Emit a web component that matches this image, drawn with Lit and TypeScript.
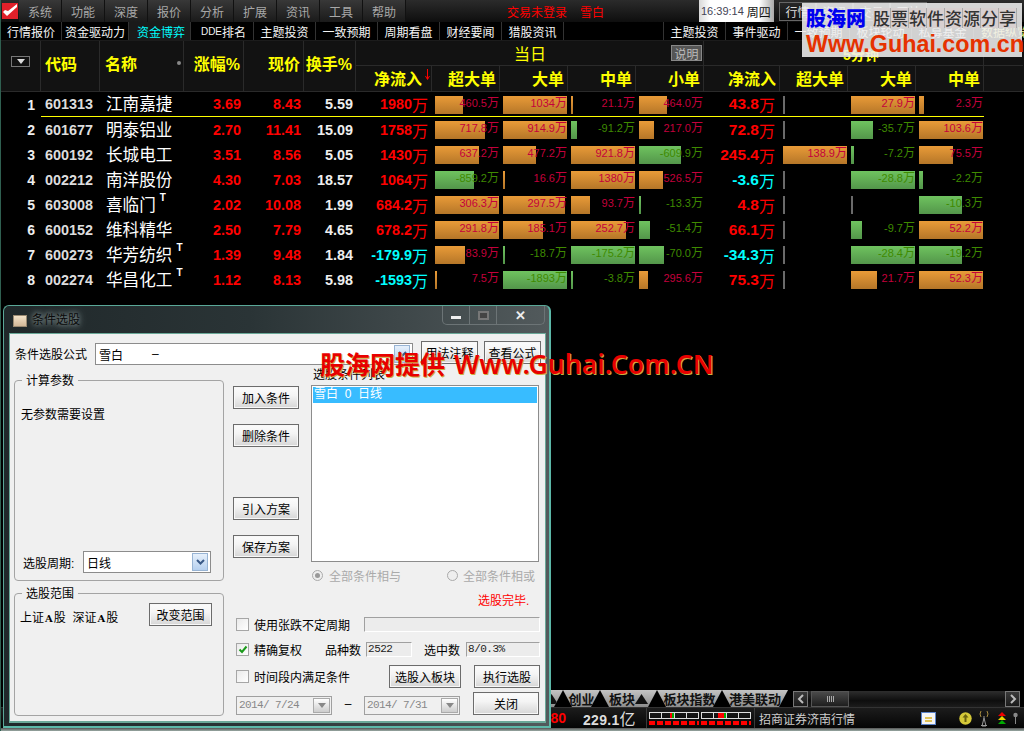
import { LitElement, html, css } from "lit";
import { customElement } from "lit/decorators.js";

type Row = { n: string; code: string; name: string; t?: boolean; pct: string; price: string; turn: string; net: string; net5: string; cells: [string, number][] };

const rows: Row[] = [
  { n: "1", code: "601313", name: "江南嘉捷", pct: "3.69", price: "8.43", turn: "5.59", net: "1980万", net5: "43.8万",
    cells: [["460.5万", 28], ["1034万", 64], ["21.1万", 2], ["464.0万", 28], ["", 2], ["27.9万", 64], ["2.3万", 5]] },
  { n: "2", code: "601677", name: "明泰铝业", pct: "2.70", price: "11.41", turn: "15.09", net: "1758万", net5: "72.8万",
    cells: [["717.8万", 50], ["914.9万", 64], ["-91.2万", 6], ["217.0万", 15], ["", 2], ["-35.7万", 22], ["103.6万", 64]] },
  { n: "3", code: "600192", name: "长城电工", pct: "3.51", price: "8.56", turn: "5.05", net: "1430万", net5: "245.4万",
    cells: [["637.2万", 44], ["477.2万", 33], ["921.8万", 64], ["-609.9万", 42], ["138.9万", 64], ["-7.2万", 3], ["75.5万", 34]] },
  { n: "4", code: "002212", name: "南洋股份", pct: "4.30", price: "7.03", turn: "18.57", net: "1064万", net5: "-3.6万",
    cells: [["-859.2万", 39], ["16.6万", 2], ["1380万", 64], ["526.5万", 24], ["", 2], ["-28.8万", 64], ["-2.2万", 4]] },
  { n: "5", code: "603008", name: "喜临门", t: true, pct: "2.02", price: "10.08", turn: "1.99", net: "684.2万", net5: "4.8万",
    cells: [["306.3万", 64], ["297.5万", 62], ["93.7万", 19], ["-13.3万", 2], ["", 2], ["", 2], ["-10.3万", 43]] },
  { n: "6", code: "600152", name: "维科精华", pct: "2.50", price: "7.79", turn: "4.65", net: "678.2万", net5: "66.1万",
    cells: [["291.8万", 64], ["185.1万", 40], ["252.7万", 55], ["-51.4万", 11], ["", 2], ["-9.7万", 11], ["52.2万", 64]] },
  { n: "7", code: "600273", name: "华芳纺织", t: true, pct: "1.39", price: "9.48", turn: "1.84", net: "-179.9万", net5: "-34.3万",
    cells: [["83.9万", 30], ["-18.7万", 2], ["-175.2万", 64], ["-70.0万", 25], ["", 2], ["-28.4万", 64], ["-19.2万", 43]] },
  { n: "8", code: "002274", name: "华昌化工", t: true, pct: "1.12", price: "8.13", turn: "5.98", net: "-1593万", net5: "75.3万",
    cells: [["7.5万", 2], ["-1893万", 64], ["-3.8万", 2], ["295.6万", 9], ["", 2], ["21.7万", 26], ["52.3万", 64]] },
];

const menus = ["系统", "功能", "深度", "报价", "分析", "扩展", "资讯", "工具", "帮助"];

@customElement("app-root")
export class AppRoot extends LitElement {
  static styles = css`
    :host { display: block; width: 1024px; height: 731px; overflow: hidden; position: relative; background: #000;
      font-family: "Liberation Sans", "Noto Sans CJK SC", sans-serif; font-size: 12px; color: #fff; }
    * { box-sizing: border-box; }
    .app { display: flex; flex-direction: column; height: 731px; border-left: 1px solid #2f5f50; overflow: hidden; }

    .menubar { height: 22px; display: flex; align-items: stretch; background: linear-gradient(#2b2b2b, #0e0e0e); flex: none; margin-left: -1px; }
    .logo { width: 19px; flex: none; display: flex; align-items: center; justify-content: center; }
    .menu { width: 43px; flex: none; border-right: 1px solid #111; background: linear-gradient(#383838, #1a1a1a); color: #a8a8a8;
      display: flex; align-items: center; padding-left: 9px; font-size: 12px; }
    .trade { margin-left: 101px; color: #f00; width: 73px; flex: none; display: flex; align-items: center; }
    .user { color: #f00; width: 119px; flex: none; display: flex; align-items: center; }
    .clock { width: 75px; flex: none; background: linear-gradient(90deg, #d8d8d8, #fff 15%, #fff 80%, #aaa); display: flex; align-items: center; padding-left: 2px; gap: 3px; color: #111; }
    .clock b { font-weight: normal; font-size: 11px; color: #445; }
    .topbtn { display: flex; align-items: center; margin: 2px 0 1px 5px; flex: 1; }
    .topbtn span { width: 37px; height: 19px; border: 1px solid #666; color: #ddd; display: flex; align-items: center; justify-content: center; }

    .tabs { height: 19px; flex: none; background: #000; display: flex; align-items: stretch; border-bottom: 1px solid #1c1c1c; overflow: hidden; }
    .tab { width: 62px; flex: none; border-right: 1px solid #333; display: flex; align-items: center; justify-content: center; color: #f4f4f4; font-size: 12px; white-space: nowrap; }
    .tab.first { width: 61px; }
    .tab.wide { width: 67px; }
    .tab.active { color: #0ff; background: #1a1a1a; padding-left: 3px; }
    .tab.dde { width: 63px; padding-left: 3px; }
    .tab.dde small { font-size: 10px; }
    .tab.blank { width: 100px; }
    .tab.gold { color: #ffff80; border-right: 0; }

    .grid { display: grid; grid-template-columns: 40px 59px 84px 60px 60px 52px 76px 68px 68px 68px 68px 76px 68px 68px 68px 39px; }
    .head { height: 51px; grid-template-rows: 25px 26px; background: #121212; flex: none; }
    .h { border-right: 1px solid #2a2a2a; border-bottom: 1px solid #2a2a2a; color: #ff0; font-weight: bold; font-size: 16px; display: flex; align-items: center; white-space: nowrap; }
    .h.span2 { grid-row: 1 / span 2; padding-bottom: 7px; }
    .h.r { justify-content: flex-end; padding-right: 3px; }
    .h.l { padding-left: 4px; }
    .h.l2 { padding-left: 5px; }
    .h.sub { justify-content: flex-end; padding: 0 3px 2px 0; }
    .h.first { justify-content: center; padding-bottom: 10px; }
    .drop { width: 19px; height: 11px; border: 1px solid #777; display: flex; align-items: center; justify-content: center; }
    .drop::after { content: ""; border: 4px solid transparent; border-top: 5px solid #ddd; border-bottom: 0; }
    .dot { width: 4px; height: 4px; border-radius: 50%; background: #888; margin-left: 40px; }
    .arrow { margin: -6px 0 0 3px; display: block; }
    .h.sub.witharrow { padding-right: 1px; }
    .today { grid-column: 7 / span 5; padding-left: 158px; font-weight: normal; justify-content: space-between; padding-right: 1px; }
    .today i { font-style: normal; font-weight: normal; font-size: 12px; width: 31px; height: 16px; background: #555; border: 1px solid #888; color: #bbb; display: flex; align-items: center; justify-content: center; }
    .five { grid-column: 12 / span 4; padding-left: 139px; font-size: 14px; padding-top: 2px; }
    .empty { grid-column: 16; border-right: 0; }
    .h.noedge { border-right: 0; }

    .row { height: 25px; flex: none; }
    .c { display: flex; align-items: center; white-space: nowrap; height: 25px; }
    .row.hl .c:not(:first-child):not(:last-child) { border-bottom: 1px solid #ff0; }
    .num { justify-content: flex-end; padding-right: 6px; font-weight: bold; font-size: 14px; color: #eee; }
    .code { padding-left: 4px; font-weight: bold; font-size: 14.4px; color: #ddd; }
    .name { padding: 0 0 2px 6px; font-size: 16.6px; }
    .name sup { font-size: 10px; font-weight: bold; margin-left: 4px; line-height: 1; align-self: flex-start; margin-top: 1px; }
    .val { justify-content: flex-end; padding-right: 3px; font-weight: bold; font-size: 14.4px; color: #f00; }
    .val.white { color: #eee; }
    .val.netv { padding-right: 4px; }
    .val.net5 { font-size: 15.5px; padding-right: 5px; }
    .unit { font-size: 16px; font-weight: normal; }
    .red { color: #f00; } .cyan { color: #0ff; }
    .cell { padding: 4px 0 3px 3px; display: flex; align-items: flex-start; }
    .track { display: grid; grid-template: 18px / 64px; width: 64px; }
    .bar { grid-area: 1 / 1; height: 18px; }
    .bar.up { background: linear-gradient(#e99b38, #b57628); }
    .bar.down { background: linear-gradient(#6fc35f, #53964a); }
    .bar.flat { background: #6a6a6a; }
    .lbl { grid-area: 1 / 1; justify-self: end; font-size: 11px; line-height: 15px; white-space: nowrap; height: 18px; z-index: 1; }
    .lbl u { text-decoration: none; font-size: 12px; }
    .lbl.up { color: #c4003c; }
    .lbl.down { color: #3f8a00; }

    .fill { flex: 1; }

    .btabs { height: 17px; flex: none; display: flex; background: #000; }
    .btab-pad { width: 499px; flex: none; }
    .btab { height: 17px; flex: none; background: linear-gradient(#c4c4c4, #8c8c8c); color: #111; font-weight: bold; font-size: 13px; display: flex; align-items: center; justify-content: center;
      clip-path: polygon(0 0, 100% 0, calc(100% - 9px) 100%, 9px 100%); white-space: nowrap; }
    .btab svg { display: block; flex: none; }
    .btab.b0 { width: 63px; justify-content: flex-end; padding-right: 5px; }
    .btab.b1 { width: 37px; } .btab.b2 { width: 57px; } .btab.b3 { width: 65px; } .btab.b4 { width: 66px; }
    .scroll { margin-left: 5px; width: 227px; height: 16px; margin-top: 1px; flex: none; display: flex; background: linear-gradient(#2e2e2e, #0e0e0e 60%, #1c1c1c); align-items: stretch; }
    .sb { width: 15px; border: 1px solid #777; background: linear-gradient(#3a3a3a, #1a1a1a); display: flex; align-items: center; justify-content: center; }
    .thumb { width: 38px; margin-left: 3px; border: 1px solid #555; background: linear-gradient(#4a4a4a, #1e1e1e); display: flex; align-items: center; justify-content: center; }
    .thumb i { width: 7px; height: 6px; background: repeating-linear-gradient(90deg, #aaa 0 1px, transparent 1px 2px); }
    .sp { flex: 1; }

    .status { height: 21px; flex: none; background: linear-gradient(#1c1c1c, #050505); border-top: 1px solid #333; display: flex; align-items: center; }
    .s80 { width: 565px; flex: none; text-align: right; color: #f00; font-weight: bold; font-size: 14px; }
    .amount { margin-left: 17px; width: 63px; flex: none; font-weight: bold; font-size: 14px; color: #ddd; white-space: nowrap; letter-spacing: .3px; }
    .amount span { font-weight: normal; font-size: 16px; }
    .vsep { width: 1px; background: #3a3a3a; align-self: stretch; flex: none; }
    .gauges { display: flex; gap: 2px; margin: 0 3px 0 2px; flex: none; }
    .gauge { width: 50px; display: flex; flex-direction: column; gap: 2px; }
    .gbox { height: 7px; border: 1px solid #ddd; display: flex; }
    .gbox i { flex: 1; border-right: 1px solid #ddd; }
    .gbox i:last-child { border-right: 0; }
    .gbox i.m1 { background: linear-gradient(90deg, transparent 65%, #f00 65% 85%, #0a0 85%); }
    .gbox i.m2 { background: linear-gradient(90deg, transparent 30%, #f00 30% 85%, #0a0 85%); }
    .dash { height: 4px; background: repeating-linear-gradient(90deg, #f00 0 6px, transparent 6px 8px); }
    .stxt { margin-left: 4px; color: #ccc; font-size: 12px; white-space: nowrap; width: 162px; flex: none; }
    .icon { display: block; flex: none; }
    .i1 { width: 15px; height: 13px; margin-right: 23px; }
    .i2 { width: 13px; height: 13px; margin-right: 6px; }
    .i3 { width: 12px; height: 17px; margin-right: 8px; }
    .i4 { width: 8px; height: 13px; margin-right: 7px; }
    .i5 { width: 5px; height: 13px; }
    .frame { height: 3px; flex: none; background: linear-gradient(#555, #99aaa4); }

    .dialog { position: absolute; left: 3px; top: 305px; width: 548px; height: 423px; background: linear-gradient(90deg, #20282a, #2a3436 45%, #525a5c);
      border: 1px solid #5aa898; border-right: 2px solid #5cb8a8; border-bottom: 2px solid #5cb8a8; border-radius: 6px 6px 0 0; padding: 0 3px 3px 5px; display: flex; flex-direction: column; color: #000; }
    .title { height: 27px; flex: none; display: flex; align-items: flex-start; }
    .ticon { width: 14px; height: 12px; margin: 9px 5px 0 4px; background: linear-gradient(#f3e2c8, #d2b898); border: 1px solid #9a8a72; }
    .ttext { color: #0a0a0a; font-size: 12px; margin-top: 6px; line-height: 16px; text-shadow: 0 0 5px #8c9c9c, 0 0 8px #8c9c9c; }
    .wbtns { margin-left: auto; display: flex; height: 19px; border: 1px solid #6c7476; border-top: 0; border-radius: 0 0 5px 5px; margin-right: 1px; }
    .wb { display: flex; align-items: center; justify-content: center; border-right: 1px solid #6c7476; width: 27px; }
    .wb.x { width: 47px; border-right: 0; color: #eee; font-weight: bold; font-size: 13px; }
    .wb .min { width: 10px; height: 3px; background: #eee; margin-top: 5px; }
    .wb .max { width: 11px; height: 9px; border: 2px solid #777; background: #444; }
    .client { flex: 1; background: #f0f0f0; border: 1px solid #6aa898; border-bottom-width: 2px; display: flex; flex-direction: column; font-size: 12px; color: #000; min-height: 0; }
    .topline { display: flex; align-items: flex-start; height: 33px; padding: 7px 0 0 5px; }
    .topline label { width: 80px; flex: none; margin-top: 4px; white-space: nowrap; }
    .combo { width: 318px; flex: none; height: 22px; margin-top: 2px; border: 1px solid #8c8c8c; background: #fff; display: flex; align-items: center; padding-left: 3px; margin-right: 8px; }
    .combo span { width: 53px; }
    .dbtn { width: 16px; height: 18px; margin-left: auto; margin-right: 2px; background: linear-gradient(#e6f0fb, #b6d0ef); border: 1px solid #98b4d4; display: flex; align-items: center; justify-content: center; }
    .btn { display: flex; align-items: center; justify-content: center; width: 66px; height: 23px; flex: none; border: 1px solid #6c6c6c; background: linear-gradient(#fafafa 0 2px, #f4f4f4 40%, #d6d6d6); color: #000; white-space: nowrap; box-shadow: inset 0 0 0 1px #f8f8f8; }
    .btn.n { width: 57px; margin-right: 6px; }
    .btn.range { width: 63px; margin-left: auto; margin-right: 11px; margin-top: -5px; }
    .btn.panel { width: 72px; margin-left: 39px; }
    .btn.mgl { margin-left: 13px; }
    .body { display: flex; padding-left: 4px; flex: 1; }
    .leftc { width: 210px; flex: none; display: flex; flex-direction: column; gap: 12px; padding-top: 13px; }
    .gr { border: 1px solid #a4a4a4; border-radius: 4px; position: relative; }
    .gr > em { position: absolute; left: 7px; top: -7px; background: #f0f0f0; padding: 0 4px; font-style: normal; line-height: 14px; }
    .g1 { height: 201px; display: flex; flex-direction: column; justify-content: space-between; padding: 24px 0 7px 6px; }
    .g2 { height: 123px; padding: 14px 0 0 5px; display: flex; align-items: flex-start; }
    .g2 b { font-family: "DejaVu Serif", serif; font-size: 10px; font-weight: bold; margin: 0 1px; }
    .period { display: flex; align-items: center; gap: 3px; margin-left: 2px; }
    .period label { width: 57px; }
    .sel { width: 128px; height: 22px; border: 1px solid #8c8c8c; background: #fff; display: flex; align-items: center; padding-left: 3px; }
    .rightc { margin-left: 9px; width: 308px; flex: none; display: flex; flex-direction: column; }
    .upper { display: flex; height: 216px; flex: none; }
    .midc { width: 66px; display: flex; flex-direction: column; padding-top: 19px; }
    .mg15 { margin-top: 15px; } .mg50 { margin-top: 50px; }
    .listc { margin-left: 12px; width: 230px; }
    .listlabel { height: 18px; padding: 1px 0 0 2px; line-height: 14px; }
    .list { width: 228px; height: 177px; border: 1px solid #8c8c8c; background: #fff; padding: 1px; }
    .item { height: 16px; background: #38bcff; color: #fff; padding-left: 1px; line-height: 14px; white-space: pre; }
    .radios { display: flex; height: 16px; margin-top: 5px; color: #aaa; align-items: center; padding-left: 1px; white-space: nowrap; }
    .rd { width: 11px; height: 11px; border-radius: 50%; border: 1px solid #aaa; background: #eee; margin-right: 6px; flex: none; display: flex; align-items: center; justify-content: center; }
    .rd.on::after { content: ""; width: 5px; height: 5px; border-radius: 50%; background: #999; }
    .rd.sec { margin-left: 46px; margin-right: 5px; }
    .done { margin-top: 11px; height: 14px; color: #f00; padding-left: 245px; line-height: 14px; white-space: nowrap; flex: none; }
    .frow { display: flex; align-items: center; padding-left: 3px; white-space: nowrap; flex: none; }
    .fa { height: 16px; margin-top: 8px; }
    .fb { height: 16px; margin-top: 9px; }
    .fc { height: 23px; margin-top: 8px; }
    .fd { height: 23px; margin-top: 4px; }
    .chk { width: 13px; height: 13px; border: 1px solid #a6a6a6; background: linear-gradient(135deg, #eaeaea, #fff); margin-right: 5px; flex: none; display: flex; align-items: center; justify-content: center; }
    .field { height: 15px; flex: none; background: #ececec; border: 1px solid; border-color: #a0a0a0 #fff #fff #a0a0a0; font-family: "Liberation Mono", monospace; font-size: 11px; line-height: 13px; padding-left: 1px; letter-spacing: -.5px; color: #222; }
    .field.w176 { width: 176px; margin-left: 14px; }
    .field.w46 { width: 46px; margin: 0 12px 0 5px; }
    .field.w74 { width: 74px; margin-left: 6px; }
    .lb1 { margin-left: 23px; }
    .date { width: 96px; flex: none; height: 19px; border: 1px solid #a0a0a0; display: flex; align-items: center; justify-content: space-between; padding: 0 1px 0 2px; color: #888; font-family: "Liberation Mono", monospace; font-size: 11px; letter-spacing: -.6px; background: #f0f0f0; margin-top: 3px; }
    .date i { width: 17px; height: 15px; background: linear-gradient(#fff, #ccc); border: 1px solid #aaa; display: flex; align-items: center; justify-content: center; }
    .date i::after { content: ""; border: 4px solid transparent; border-top: 5px solid #888; border-bottom: 0; }
    .dash2 { width: 32px; text-align: center; }

    .mark { position: absolute; left: 320px; top: 347px; color: #e80000; font-size: 25px; font-weight: 700; line-height: 32px; white-space: nowrap; text-shadow: 1px 1px 0 #c8b040; font-family: "Noto Sans CJK SC", sans-serif; }
    .mark span { font-family: "Noto Sans", sans-serif; font-weight: 600; font-size: 26.6px; margin-left: 9px; }
    .wm { position: absolute; left: 802px; top: 3px; width: 220px; height: 54px; background: rgba(238, 238, 238, .88); }
    .wm1 { display: flex; height: 26px; align-items: center; padding: 4px 0 0 4px; }
    .wmb { color: #0000f0; font-size: 20px; font-weight: 900; width: 67px; line-height: 24px; font-family: "Noto Sans CJK SC", sans-serif; }
    .wmt { display: flex; color: #333; font-size: 17px; font-family: "Noto Sans CJK SC", sans-serif; font-weight: 500; }
    .wmt i { font-style: normal; width: 18px; height: 20px; text-align: center; line-height: 19px; background: #d8d0d0; border-right: 1px solid #aaa; }
    .wm2 { color: #e63200; font-weight: bold; font-size: 23.3px; line-height: 30px; padding-left: 4px; font-family: "Liberation Sans", sans-serif; white-space: nowrap; }
  `;

  private bar(c: [string, number]) {
    const [text, w] = c;
    const kind = text === "" ? "flat" : text.startsWith("-") ? "down" : "up";
    return html`<div class="c cell"><div class="track">
      <div class="bar ${kind}" style="width:${w}px"></div>
      ${text ? html`<div class="lbl ${kind}">${text.slice(0, -1)}<u>万</u></div>` : ""}
    </div></div>`;
  }

  private money(v: string) {
    return html`${v.slice(0, -1)}<span class="unit">万</span>`;
  }

  private tri() {
    return html`<svg width="13" height="10" viewBox="0 0 13 10"><path d="M6.5 0L13 10H0Z" fill="#111"/></svg>`;
  }

  render() {
    return html`
      <div class="app">
        <div class="menubar">
          <div class="logo">
            <svg width="16" height="16" viewBox="0 0 16 16"><rect width="16" height="16" fill="#e0202a"/><path d="M1 9 L5 13 L15 4 L15 1 L6 8 L3 7 Z" fill="#fff"/></svg>
          </div>
          ${menus.map((m) => html`<div class="menu">${m}</div>`)}
          <div class="trade">交易未登录</div>
          <div class="user">雪白</div>
          <div class="clock"><b>16:39:14</b>周四</div>
          <div class="topbtn"><span>行情</span><span>资讯</span><span>交易</span><span>网站</span></div>
        </div>

        <div class="tabs">
          <div class="tab first">行情报价</div>
          <div class="tab wide">资金驱动力</div>
          <div class="tab active">资金博弈</div>
          <div class="tab dde"><small>DDE</small>排名</div>
          <div class="tab">主题投资</div>
          <div class="tab">一致预期</div>
          <div class="tab">周期看盘</div>
          <div class="tab">财经要闻</div>
          <div class="tab">猎股资讯</div>
          <div class="tab blank"></div>
          <div class="tab">主题投资</div>
          <div class="tab">事件驱动</div>
          <div class="tab">一致预期</div>
          <div class="tab">板块轮动</div>
          <div class="tab">私募基金</div>
          <div class="tab gold">数据纵览</div>
        </div>

        <div class="grid head">
          <div class="h span2 first"><div class="drop"></div></div>
          <div class="h span2 l">代码</div>
          <div class="h span2 l2">名称<span class="dot"></span></div>
          <div class="h span2 r">涨幅%</div>
          <div class="h span2 r">现价</div>
          <div class="h span2 r">换手%</div>
          <div class="h today">当日<i>说明</i></div>
          <div class="h five">5分钟</div>
          <div class="h empty"></div>
          <div class="h sub witharrow">净流入<svg class="arrow" width="5" height="11" viewBox="0 0 5 11"><path d="M2.5 0V10M0.5 7L2.5 10.5L4.5 7" stroke="#f00" fill="none"/></svg></div>
          <div class="h sub">超大单</div>
          <div class="h sub">大单</div>
          <div class="h sub">中单</div>
          <div class="h sub">小单</div>
          <div class="h sub">净流入</div>
          <div class="h sub">超大单</div>
          <div class="h sub">大单</div>
          <div class="h sub">中单</div>
          <div class="h noedge"></div>
        </div>

        ${rows.map((r, i) => html`
          <div class="grid row ${i === 0 ? "hl" : ""}">
            <div class="c num">${r.n}</div>
            <div class="c code">${r.code}</div>
            <div class="c name">${r.name}${r.t ? html`<sup>T</sup>` : ""}</div>
            <div class="c val">${r.pct}</div>
            <div class="c val">${r.price}</div>
            <div class="c val white">${r.turn}</div>
            <div class="c val netv ${r.net.startsWith("-") ? "cyan" : "red"}">${this.money(r.net)}</div>
            ${r.cells.slice(0, 4).map((c) => this.bar(c))}
            <div class="c val net5 ${r.net5.startsWith("-") ? "cyan" : "red"}">${this.money(r.net5)}</div>
            ${r.cells.slice(4).map((c) => this.bar(c))}
            <div class="c"></div>
          </div>`)}

        <div class="fill"></div>

        <div class="btabs">
          <div class="btab-pad"></div>
          <div class="btab b0">${this.tri()}</div>
          <div class="btab b1">创业</div>
          <div class="btab b2">板块${this.tri()}</div>
          <div class="btab b3">板块指数</div>
          <div class="btab b4">港美联动</div>
          <div class="scroll">
            <div class="sb"><svg width="8" height="10" viewBox="0 0 8 10"><path d="M6 1L2 5L6 9" stroke="#bbb" stroke-width="2" fill="none"/></svg></div>
            <div class="thumb"><i></i></div>
            <div class="sp"></div>
            <div class="sb"><svg width="8" height="10" viewBox="0 0 8 10"><path d="M2 1L6 5L2 9" stroke="#bbb" stroke-width="2" fill="none"/></svg></div>
          </div>
        </div>

        <div class="status">
          <div class="s80">80</div>
          <div class="amount">229.1<span>亿</span></div>
          <div class="vsep"></div>
          <div class="gauges">
            <div class="gauge"><div class="gbox"><i></i><i class="m1"></i><i></i><i></i></div><div class="dash"></div></div>
            <div class="gauge"><div class="gbox"><i></i><i class="m2"></i><i></i><i></i></div><div class="dash"></div></div>
          </div>
          <div class="vsep"></div>
          <div class="stxt">招商证券济南行情</div>
          <svg class="icon i1" viewBox="0 0 15 13"><rect x=".5" y=".5" width="14" height="12" fill="#f4f4f4" stroke="#5a82c8"/><path d="M4 6H11M4 9H11" stroke="#d8b020" stroke-width="1.4"/></svg>
          <svg class="icon i2" viewBox="0 0 13 13"><circle cx="6.5" cy="6.5" r="6.2" fill="#d4c838"/><path d="M6.5 2L9.5 5.5H7.5V10H5.5V5.5H3.5Z" fill="#6a6210"/></svg>
          <svg class="icon i3" viewBox="0 0 12 17"><path d="M6 6V8M4 16L6 8L8 16ZM3 15.5H9" stroke="#999" fill="none"/><path d="M3 1Q1 4 3 7M9 1Q11 4 9 7" stroke="#a88c40" fill="none"/></svg>
          <svg class="icon i4" viewBox="0 0 8 13"><path d="M4 0L8 4H0Z" fill="#e00"/><path d="M4 4L8 8H0Z" fill="#e8d800"/><path d="M4 8L8 12H0Z" fill="#0a0"/></svg>
          <svg class="icon i5" viewBox="0 0 5 13"><circle cx="2.5" cy="3" r="2.2" fill="#888"/><path d="M2.5 4V12" stroke="#888"/></svg>
        </div>
        <div class="frame"></div>
      </div>

      <div class="dialog">
        <div class="title">
          <div class="ticon"></div>
          <div class="ttext">条件选股</div>
          <div class="wbtns">
            <div class="wb"><div class="min"></div></div>
            <div class="wb"><div class="max"></div></div>
            <div class="wb x">✕</div>
          </div>
        </div>
        <div class="client">
          <div class="topline">
            <label>条件选股公式</label>
            <div class="combo"><span>雪白</span>–<div class="dbtn"><svg width="9" height="6" viewBox="0 0 9 6"><path d="M1 1L4.5 4.5L8 1" stroke="#3a5a88" stroke-width="2" fill="none"/></svg></div></div>
            <div class="btn n">用法注释</div>
            <div class="btn n">查看公式</div>
          </div>
          <div class="body">
            <div class="leftc">
              <div class="gr g1">
                <em>计算参数</em>
                <div>无参数需要设置</div>
                <div class="period"><label>选股周期:</label>
                  <div class="sel">日线<div class="dbtn"><svg width="9" height="6" viewBox="0 0 9 6"><path d="M1 1L4.5 4.5L8 1" stroke="#3a5a88" stroke-width="2" fill="none"/></svg></div></div>
                </div>
              </div>
              <div class="gr g2">
                <em>选股范围</em>
                <div>上证<b>A</b>股&nbsp;&nbsp;深证<b>A</b>股</div>
                <div class="btn range">改变范围</div>
              </div>
            </div>
            <div class="rightc">
              <div class="upper">
                <div class="midc">
                  <div class="btn">加入条件</div>
                  <div class="btn mg15">删除条件</div>
                  <div class="btn mg50">引入方案</div>
                  <div class="btn mg15">保存方案</div>
                </div>
                <div class="listc">
                  <div class="listlabel">选股条件列表</div>
                  <div class="list"><div class="item">雪白  0  日线</div></div>
                  <div class="radios"><span class="rd on"></span>全部条件相与<span class="rd sec"></span>全部条件相或</div>
                </div>
              </div>
              <div class="done">选股完毕.</div>
              <div class="frow fa"><span class="chk"></span>使用张跌不定周期<div class="field w176"></div></div>
              <div class="frow fb">
                <span class="chk"><svg width="10" height="9" viewBox="0 0 10 9"><path d="M1.5 4.5L4 7L8.5 1.5" stroke="#1a9a1a" stroke-width="2" fill="none"/></svg></span>精确复权
                <span class="lb1">品种数</span><div class="field w46">2522</div>
                <span>选中数</span><div class="field w74">8/0.3%</div>
              </div>
              <div class="frow fc"><span class="chk"></span>时间段内满足条件
                <div class="btn panel">选股入板块</div>
                <div class="btn mgl">执行选股</div>
              </div>
              <div class="frow fd">
                <div class="date">2014/ 7/24<i></i></div>
                <div class="dash2">–</div>
                <div class="date">2014/ 7/31<i></i></div>
                <div class="btn mgl">关闭</div>
              </div>
            </div>
          </div>
        </div>
      </div>

      <div class="mark">股海网提供<span>Www.Guhai.Com.CN</span></div>

      <div class="wm">
        <div class="wm1"><div class="wmb">股海网</div>
          <div class="wmt">${"股票软件资源分享".split("").map((c) => html`<i>${c}</i>`)}</div></div>
        <div class="wm2">Www.Guhai.com.cn</div>
      </div>
    `;
  }
}
